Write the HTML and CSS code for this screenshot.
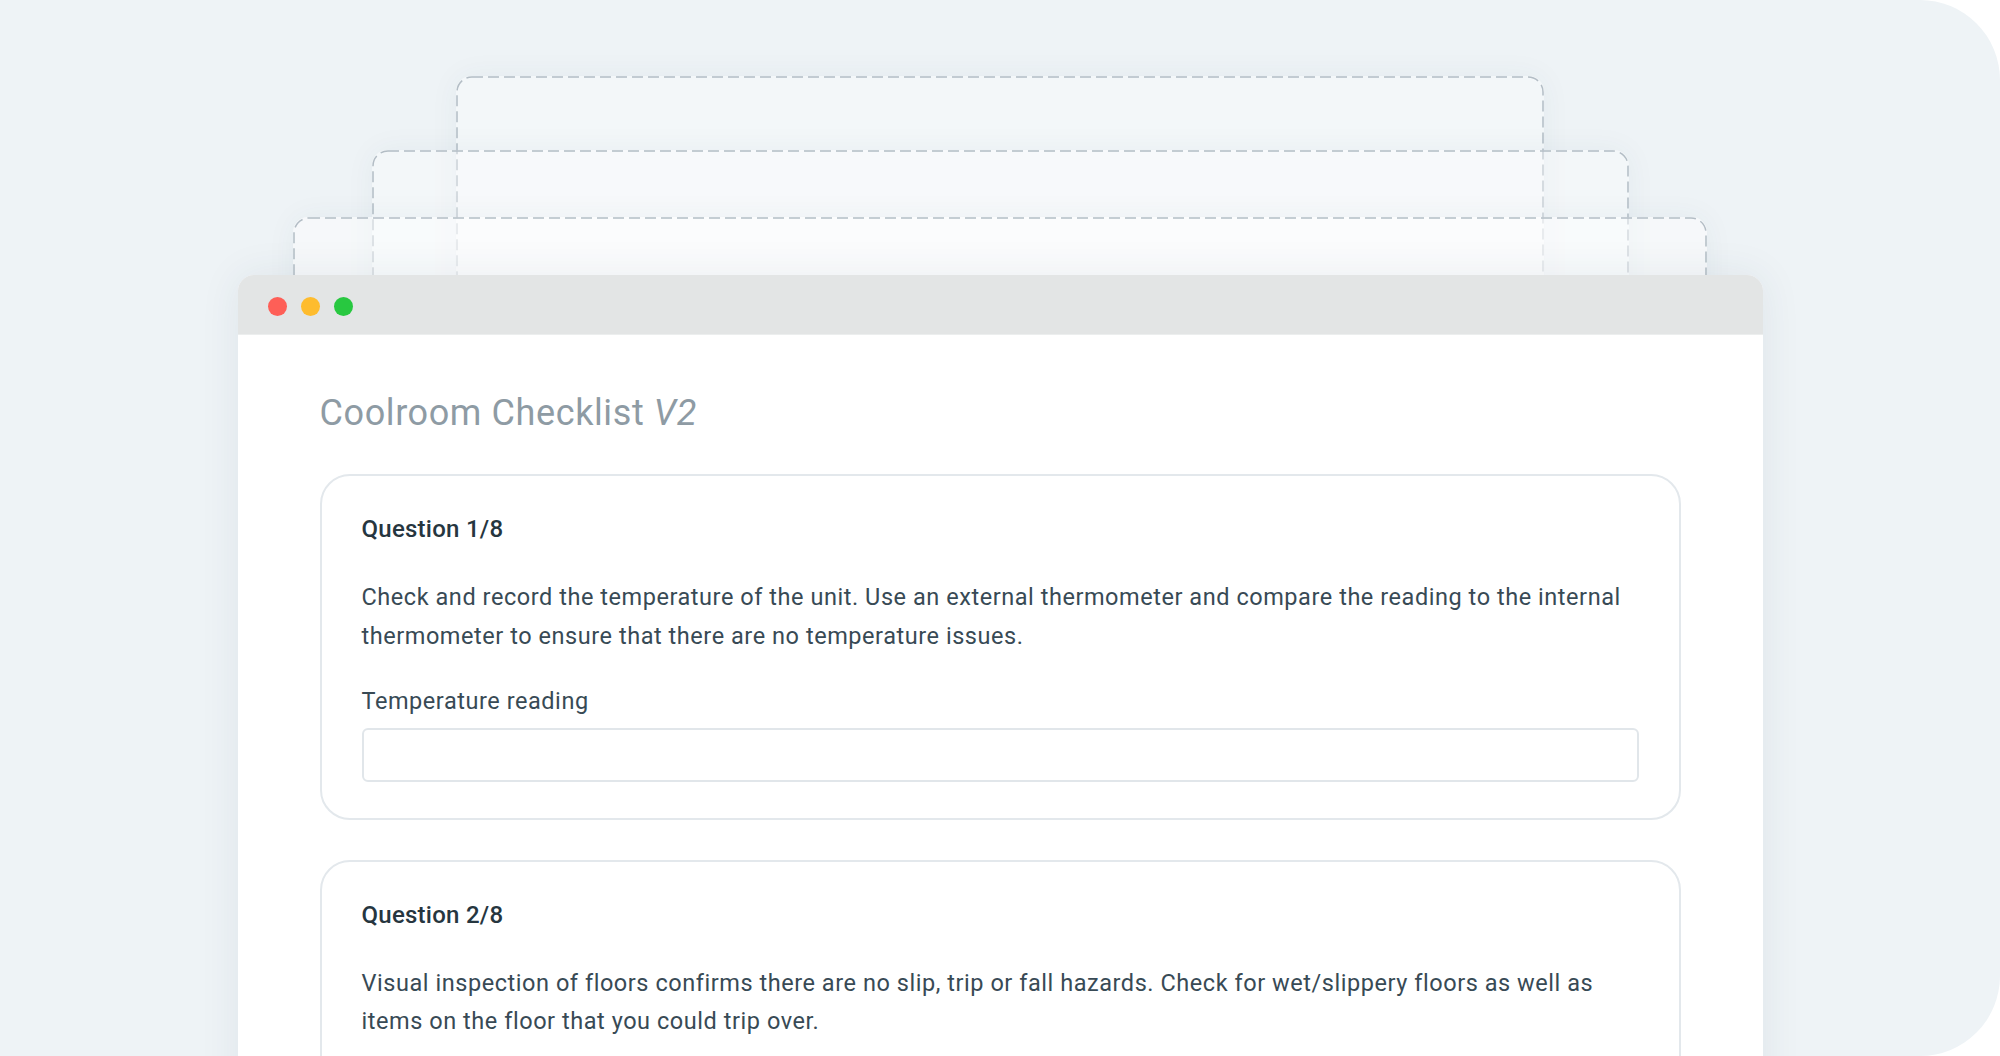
FILE: index.html
```html
<!DOCTYPE html>
<html lang="en">
<head>
<meta charset="utf-8">
<title>Coolroom Checklist V2</title>
<link rel="stylesheet" href="styles.css">
</head>
<body>
<div class="stage">
  <div class="sheet s1">
    <svg class="dash" aria-hidden="true"><rect x="1" y="1" rx="15" ry="15"></rect></svg>
  </div>
  <div class="sheet s2">
    <svg class="dash" aria-hidden="true"><rect x="1" y="1" rx="15" ry="15"></rect></svg>
  </div>
  <div class="sheet s3">
    <svg class="dash" aria-hidden="true"><rect x="1" y="1" rx="15" ry="15"></rect></svg>
  </div>
  <div class="window">
    <div class="titlebar">
      <span class="dot red"></span>
      <span class="dot yellow"></span>
      <span class="dot green"></span>
    </div>
    <div class="content">
      <h1 class="title">Coolroom Checklist <em>V2</em></h1>
      <section class="card">
        <h2 class="question">Question 1/8</h2>
        <p class="text">Check and record the temperature of the unit. Use an external thermometer and compare the reading to the internal thermometer to ensure that there are no temperature issues.</p>
        <label class="label" for="temp">Temperature reading</label>
        <input class="field" id="temp" type="text">
      </section>
      <section class="card card-tall">
        <h2 class="question">Question 2/8</h2>
        <p class="text">Visual inspection of floors confirms there are no slip, trip or fall hazards. Check for wet/slippery floors as well as items on the floor that you could trip over.</p>
      </section>
    </div>
  </div>
</div>
</body>
</html>
```

FILE: styles.css
```css
html, body {
  margin: 0;
  padding: 0;
  background: #ffffff;
}

body {
  font-family: Roboto, "Liberation Sans", Arial, sans-serif;
}

.stage {
  width: 2000px;
  height: 1056px;
  background: #eef3f6;
  border-radius: 0 80px 80px 0;
  overflow: hidden;
  display: flex;
  flex-direction: column;
  align-items: center;
  padding-top: 76px;
  box-sizing: border-box;
}

.sheet {
  position: relative;
  height: 300px;
  flex: none;
  border-radius: 15px;
  background: rgba(255, 255, 255, 0.32);
  box-shadow: 0 0 30px rgba(40, 70, 95, 0.05);
}

.s1 { width: 1088px; margin-bottom: -226px; }
.s2 { width: 1257px; margin-bottom: -233px; }
.s3 { width: 1414px; margin-bottom: -242px; background: rgba(255, 255, 255, 0.45); }

.dash {
  position: absolute;
  inset: 0;
  width: 100%;
  height: 100%;
  overflow: visible;
}

.dash rect {
  width: calc(100% - 2px);
  height: calc(100% - 2px);
  fill: none;
  stroke: #b3bdc5;
  stroke-width: 1.5;
  stroke-dasharray: 11 5;
}

.window {
  position: relative;
  width: 1525px;
  flex: none;
  background: #ffffff;
  border-radius: 16px 16px 0 0;
  box-shadow: 0 0 40px rgba(40, 70, 95, 0.08);
  overflow: hidden;
}

.titlebar {
  height: 60px;
  background: #e3e5e5;
  display: flex;
  align-items: center;
  gap: 14px;
  padding: 3px 0 0 30px;
  box-sizing: border-box;
  border-bottom: 1px solid #eceeee;
}

.dot {
  width: 19px;
  height: 19px;
  border-radius: 50%;
  display: block;
}

.red { background: #fe5f57; }
.yellow { background: #febc2e; }
.green { background: #28c840; }

.content {
  padding: 58px 82px 0 82px;
}

.title {
  margin: 0;
  font-size: 36px;
  line-height: 40px;
  letter-spacing: 0.6px;
  font-weight: 400;
  color: #8e9ba4;
}

.title em {
  font-style: italic;
}

.card {
  margin-top: 41px;
  border: 2px solid #e3e8ec;
  border-radius: 30px;
  padding: 39px 40px 36px 40px;
}

.card + .card {
  margin-top: 40px;
}

.card-tall {
  min-height: 300px;
}

.question {
  margin: 0;
  font-size: 24px;
  line-height: 29px;
  letter-spacing: 0.25px;
  font-weight: 500;
  color: #26363f;
}

.text {
  margin: 34px 0 0 0;
  font-size: 23.5px;
  line-height: 38.5px;
  letter-spacing: 0.55px;
  color: #384a55;
}

.label {
  display: block;
  margin-top: 27px;
  font-size: 23.5px;
  line-height: 38.5px;
  letter-spacing: 0.55px;
  color: #384a55;
}

.field {
  display: block;
  box-sizing: border-box;
  width: 100%;
  height: 54px;
  margin: 7px 0 0 0;
  border: 2px solid #e1e6ea;
  border-radius: 6px;
  background: #ffffff;
  font: inherit;
  outline: none;
}
```
